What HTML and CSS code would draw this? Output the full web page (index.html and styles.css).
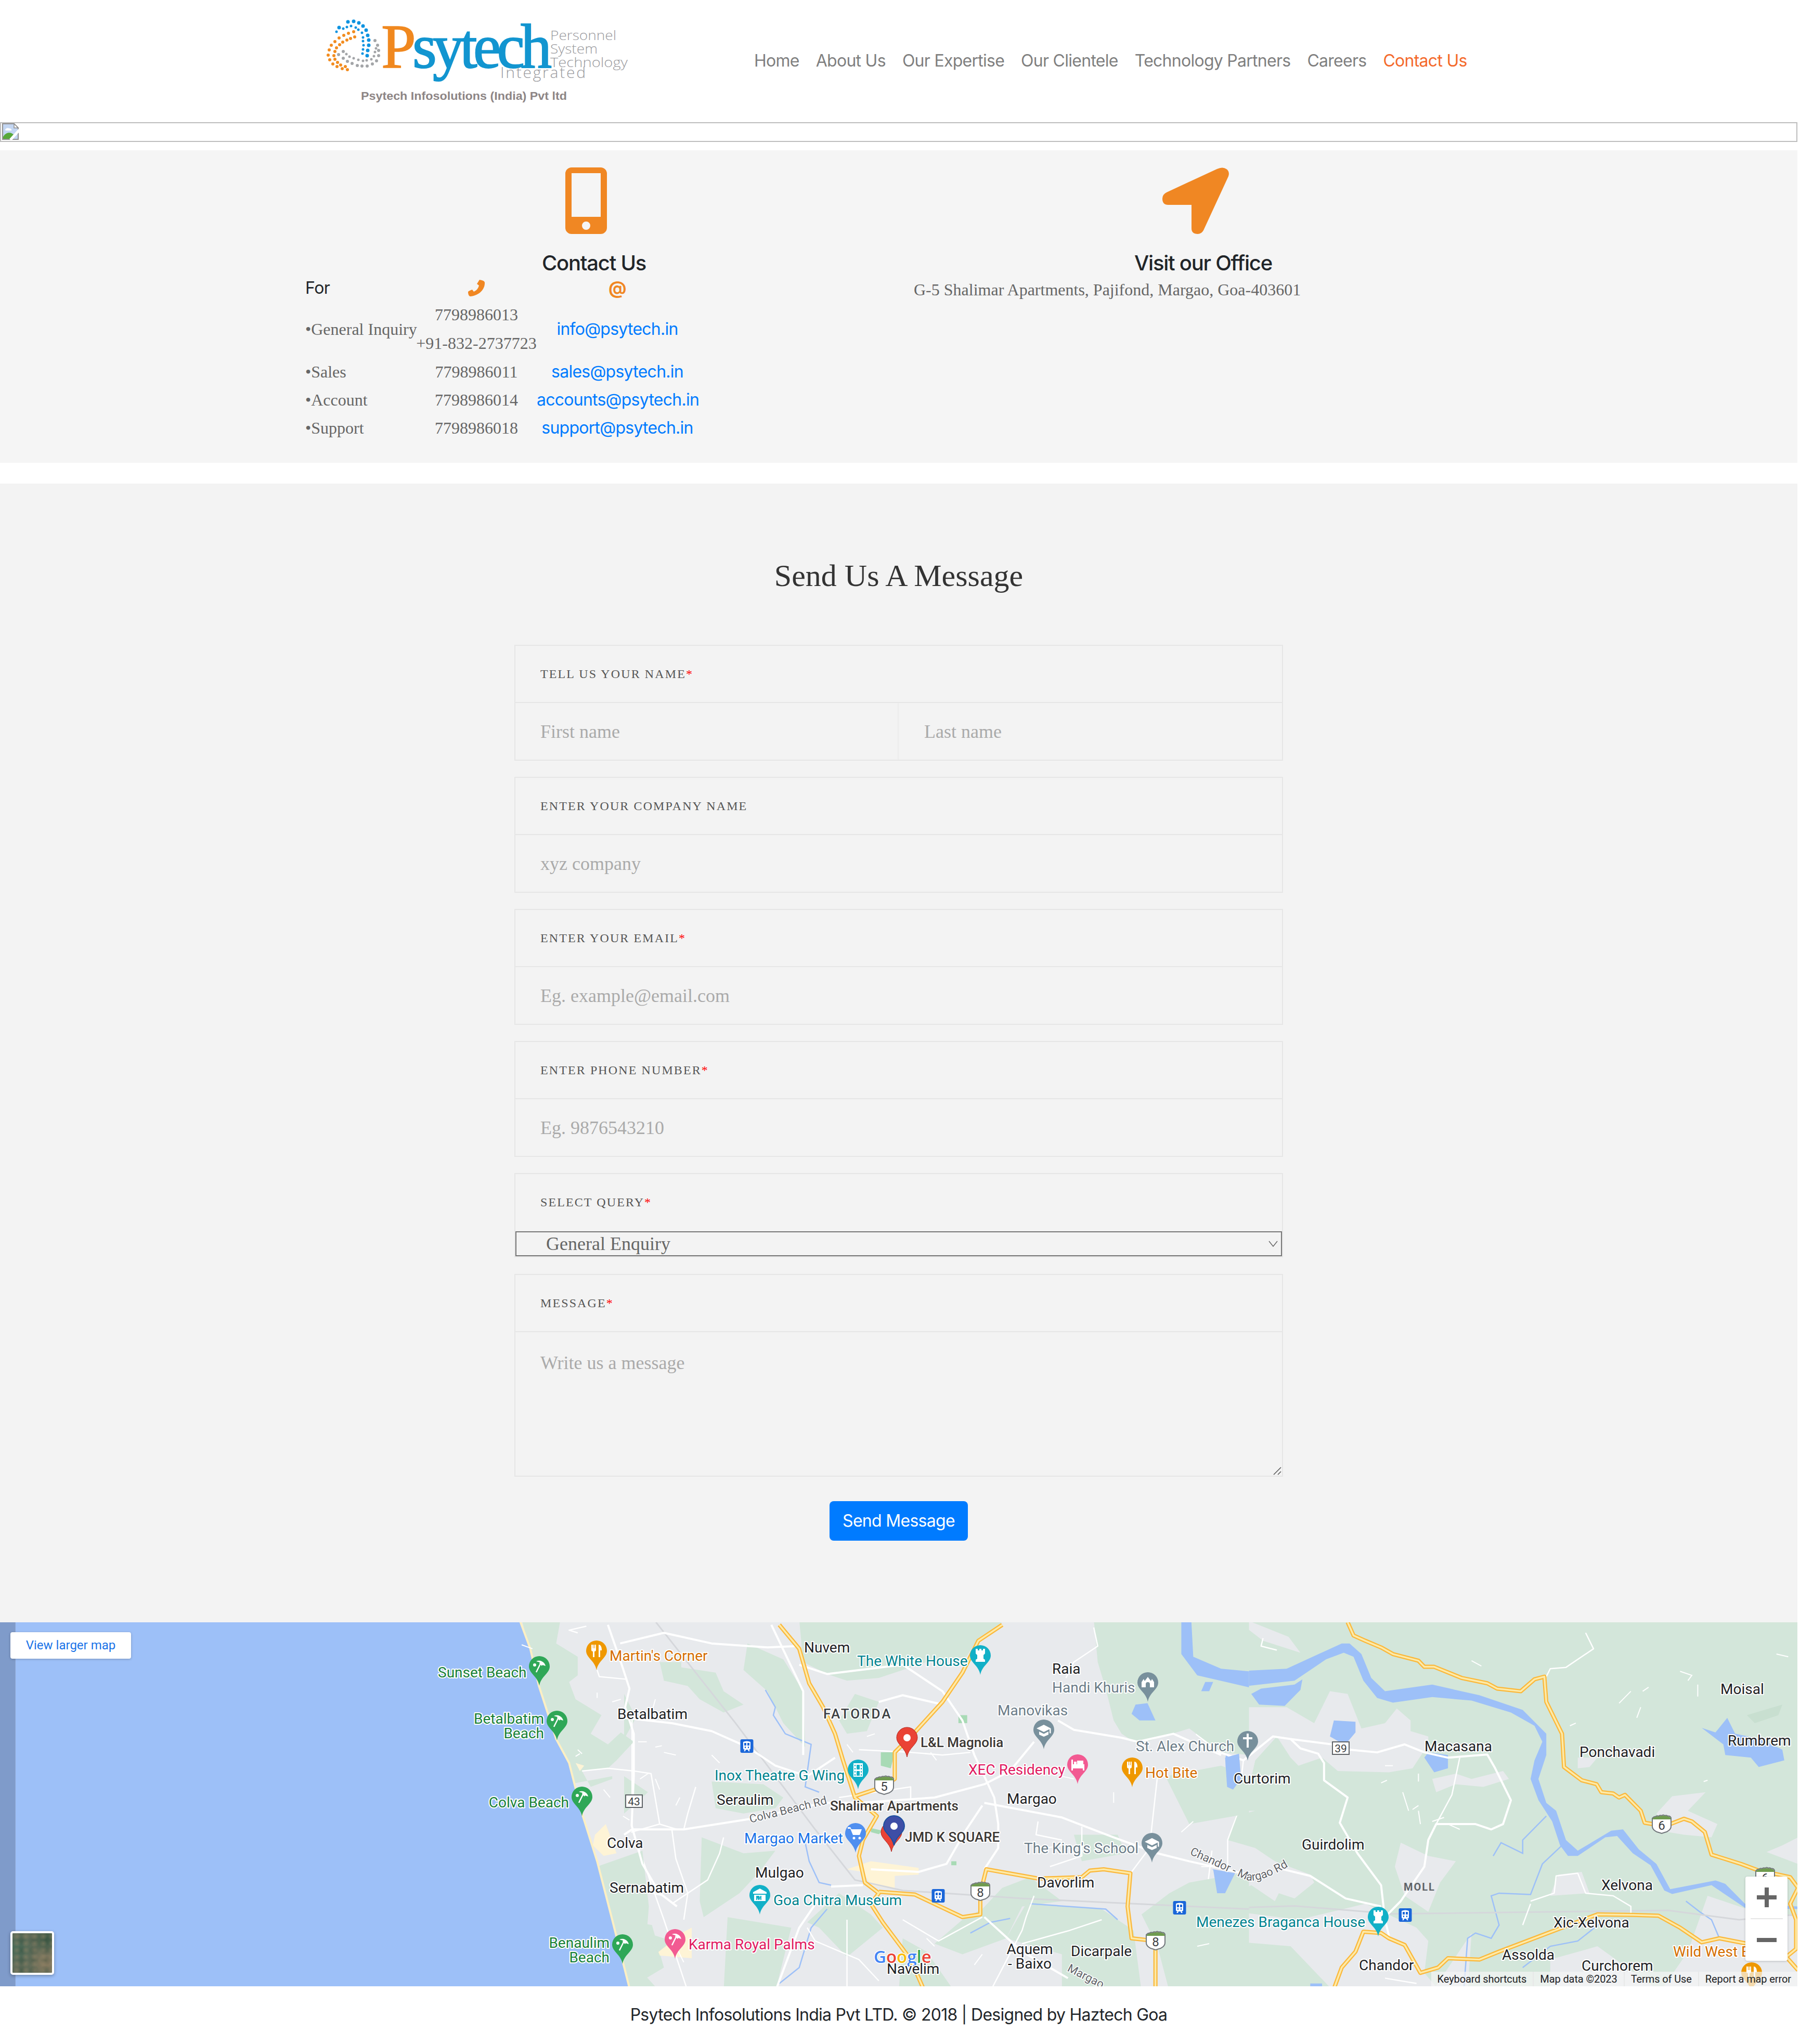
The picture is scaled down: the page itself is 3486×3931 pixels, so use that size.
FILE: index.html
```html
<!DOCTYPE html>
<html lang="en">
<head>
<meta charset="utf-8">
<title>Contact Us - Psytech Infosolutions</title>
<link rel="stylesheet" href="styles.css">
</head>
<body>
<div class="page">
  <header class="site-header">
    <svg class="logo" viewBox="620 30 600 175" width="600" height="175" aria-label="Psytech">
      <path class="dots d-blue" d="M652 53h0M669 42h0M680 41h0M690 44h0M698 50h0M704 58h0M707 68h0M709 77h0M709 87h0M707 97h0M706 107h0"/>
      <path class="dots d-blue2" d="M647 61h0M660 55h0M667 52h0M675 50h0M684 53h0M689 57h0M696 63h0M698 72h0M698 79h0M699 87h0M698 95h0M697 103h0"/>
      <path class="dots d-orange" d="M680 61h0M670 64h0M661 68h0M652 73h0M644 80h0M637 87h0M633 96h0M631 106h0M634 115h0M640 123h0M648 128h0M658 132h0M668 134h0"/>
      <path class="dots d-orange2" d="M682 71h0M674 74h0M667 77h0M659 81h0M653 86h0M647 92h0M644 99h0M642 107h0M644 114h0M649 120h0M655 125h0M664 128h0"/>
      <path class="dots d-grey" d="M660 99h0M651 105h0M660 112h0M668 118h0M677 122h0M687 126h0M696 127h0M706 127h0M716 123h0M724 117h0M728 107h0M728 97h0M726 87h0M721 78h0"/>
      <path class="dots d-grey2" d="M666 104h0M672 109h0M680 112h0M689 115h0M698 117h0M705 116h0M714 114h0M719 108h0M721 100h0M723 93h0"/>
      <text class="logo-p" x="733" y="130">P</text>
      <text class="logo-s" x="793" y="130" textLength="268" lengthAdjust="spacing">sytech</text>
      <text class="logo-t" x="1058" y="77" textLength="127" lengthAdjust="spacingAndGlyphs">Personnel</text>
      <text class="logo-t" x="1058" y="103" textLength="91" lengthAdjust="spacingAndGlyphs">System</text>
      <text class="logo-t" x="1058" y="129" textLength="149" lengthAdjust="spacingAndGlyphs">Technology</text>
      <text class="logo-i" x="962" y="150" textLength="164" lengthAdjust="spacing">Integrated</text>
      <text class="logo-c" x="694" y="192" textLength="396" lengthAdjust="spacingAndGlyphs">Psytech Infosolutions (India) Pvt ltd</text>
    </svg>
    <nav class="main-nav">
      <a href="#">Home</a>
      <a href="#">About Us</a>
      <a href="#">Our Expertise</a>
      <a href="#">Our Clientele</a>
      <a href="#">Technology Partners</a>
      <a href="#">Careers</a>
      <a href="#" class="active">Contact Us</a>
    </nav>
  </header>

  <div class="broken-img">
    <svg width="32" height="32" viewBox="0 0 32 32" class="broken-icon">
      <path d="M1 1h22l8 8v22H1z" fill="#c3d6f2" stroke="#8f8f8f" stroke-width="2"/>
      <path d="M23 1v8h8z" fill="#fff" stroke="#8f8f8f" stroke-width="1.5"/>
      <path d="M6 13c0-3 5-5 8-3 3 0 5 2 4 4H7z" fill="#fff"/>
      <path d="M2 30v-4c6-10 16-10 22-2l-4 6z" fill="#57a83a"/>
      <path d="M16 32L34 12" stroke="#fff" stroke-width="5"/>
    </svg>
  </div>

  <section class="contact-band">
    <div class="col-contact">
      <svg class="icon-phone" width="80" height="128" viewBox="0 0 80 128">
        <path fill-rule="evenodd" d="M12 0h56a12 12 0 0 1 12 12v104a12 12 0 0 1-12 12H12a12 12 0 0 1-12-12V12A12 12 0 0 1 12 0zM12 11v84h56V11zM40 104a8 8 0 1 0 0 16 8 8 0 0 0 0-16z"/>
      </svg>
      <h5 class="title title-contact">Contact Us</h5>
      <table class="contact-table">
        <tr class="row-head">
          <th class="c1">For</th>
          <th class="c2">
            <svg class="mini" width="32" height="32" viewBox="0 0 32 32"><path d="M22 0c5 1 9 2 10 5 1 14-12 26-28 27-3-1-4-5-4-9 2-2 5-3 8-4l3 4c5-2 9-7 10-12l-4-3z"/></svg>
          </th>
          <th class="c3"><span class="at">@</span></th>
        </tr>
        <tr class="row-general">
          <td class="c1">•General Inquiry</td>
          <td class="c2"><div class="ph">7798986013</div><div class="ph">+91-832-2737723</div></td>
          <td class="c3"><a href="#">info@psytech.in</a></td>
        </tr>
        <tr><td class="c1">•Sales</td><td class="c2">7798986011</td><td class="c3"><a href="#">sales@psytech.in</a></td></tr>
        <tr><td class="c1">•Account</td><td class="c2">7798986014</td><td class="c3"><a href="#">accounts@psytech.in</a></td></tr>
        <tr><td class="c1">•Support</td><td class="c2">7798986018</td><td class="c3"><a href="#">support@psytech.in</a></td></tr>
      </table>
    </div>
    <div class="col-office">
      <svg class="icon-arrow" width="128" height="128" viewBox="0 0 128 128">
        <path d="M8 48L105 3Q116-2 123 3Q130 8 127 17L79 121Q75 128 68 128Q56 128 56 117V72H11Q0 72 0 60Q0 52 8 48Z"/>
      </svg>
      <h5 class="title title-office">Visit our Office</h5>
      <p class="address">G-5 Shalimar Apartments, Pajifond, Margao, Goa-403601</p>
    </div>
  </section>

  <section class="form-band">
    <h2 class="form-title">Send Us A Message</h2>
    <form class="msg-form">
      <div class="field">
        <label class="field-label">Tell us your name<span class="req">*</span></label>
        <div class="field-split">
          <input class="field-input" type="text" placeholder="First name">
          <input class="field-input" type="text" placeholder="Last name">
        </div>
      </div>
      <div class="field">
        <label class="field-label">Enter your company name</label>
        <div class="field-row"><input class="field-input" type="text" placeholder="xyz company"></div>
      </div>
      <div class="field">
        <label class="field-label">Enter your email<span class="req">*</span></label>
        <div class="field-row"><input class="field-input" type="text" placeholder="Eg. example@email.com"></div>
      </div>
      <div class="field">
        <label class="field-label">Enter phone number<span class="req">*</span></label>
        <div class="field-row"><input class="field-input" type="text" placeholder="Eg. 9876543210"></div>
      </div>
      <div class="field field-select">
        <label class="field-label">Select query<span class="req">*</span></label>
        <div class="select-wrap">
          <select class="query"><option>General Enquiry</option></select>
          <svg class="chev" width="18" height="12" viewBox="0 0 18 12"><path d="M1 1l8 10 8-10" fill="none" stroke="#666" stroke-width="1.5"/></svg>
        </div>
      </div>
      <div class="field field-message">
        <label class="field-label">Message<span class="req">*</span></label>
        <div class="field-row area-row">
          <textarea class="field-area" placeholder="Write us a message"></textarea>
          <svg class="grip" width="16" height="16" viewBox="0 0 16 16"><path d="M1 15L15 1M9 15l6-6" fill="none" stroke="#555" stroke-width="1.5"/></svg>
        </div>
      </div>
      <div class="actions"><button type="button" class="send">Send Message</button></div>
    </form>
  </section>

  <section class="map">
    <svg class="map-svg" width="3456" height="700" viewBox="0 0 3456 700">
      <defs>
        <path id="pin" d="M0 0C-3-18-20-24-20-37A20 20 0 1 1 20-37C20-24 3-18 0 0Z"/>
        <g id="i-beach"><circle cx="-9" cy="-40" r="3"/><path d="M-6-47a13 13 0 0 1 18 9l-6-2-1 2-5-5 1-2z"/><path class="wl" d="M2-42L-6-26"/></g>
        <g id="i-food"><path d="M-10-49v10a3 3 0 0 0 3 3v11h3v-11a3 3 0 0 0 3-3v-10H-3v7h-1v-7h-2v7h-1v-7z"/><path d="M4-49c4 0 6 4 6 11H7v13H4z"/></g>
        <g id="i-rook"><path d="M-9-50h4v3h3v-3h4v3h3v-3h4v9l-3 3v7l3 2v4H-9v-4l3-2v-7l-3-3z"/></g>
        <g id="i-school"><path d="M0-47l-14 7 14 7 11-5.500v8h2.500v-9.500zM-9-34v6l9 4 9-4v-6l-9 4.500z"/></g>
        <g id="i-cross"><path d="M-2-52h4v7h7v4H2v16h-4v-16H-9v-4h7z"/></g>
        <g id="i-mon"><path d="M-12-28v-10l4-6 2 4 6-8 6 8 2-4 4 6v10H4v-6a4 4 0 0 0-8 0v6z"/></g>
        <g id="i-film"><path fill-rule="evenodd" d="M-9-50H9v26H-9zM-7-47v3h2v-3zM5-47v3h2v-3zM-7-41v3h2v-3zM5-41v3h2v-3zM-7-35v3h2v-3zM5-35v3h2v-3zM-7-29v3h2v-3zM5-29v3h2v-3zM-3-47v9H3v-9zM-3-35v9H3v-9z"/></g>
        <g id="i-cart"><path d="M-15-49h5l2 4h20l-4 11H-5l-5-12h-5z"/><circle cx="-3" cy="-28" r="2.500"/><circle cx="8" cy="-28" r="2.500"/></g>
        <g id="i-bed"><path d="M-12-47h3v9H13v12h-3v-4H-9v4h-3zM-7-43h5v5h-5zM-1-45h12v7H-1z"/></g>
        <g id="i-muse"><path fill-rule="evenodd" d="M0-50l-13 7v3h26v-3zM-11-38v12h22v-12zM-7-36v8h2v-4l2 4h2l2-4v4h2v-8H1l-1 4-1-4z"/></g>
        <g id="shield"><path class="sh-body" d="M-18-12c2-2 4-4 6-3 2-2 4-2 6-1 2-2 4-2 6-1 2-2 4-2 6 0 2-1 4-1 6 1 2-1 5 0 6 3v16c0 7-7 11-12 12l-6 2-6-2c-5-1-12-5-12-12z"/><path class="sh-top" d="M-18-10c2-3 4-5 6-4 2-2 4-2 6-1 2-2 4-2 6-1 2-2 4-2 6 0 2-1 4-1 6 1 2-1 5 0 6 5z"/></g>
        <g id="train"><rect x="-12.500" y="-13" width="25" height="26" rx="3" class="tr-b"/><path class="tr-w" fill-rule="evenodd" d="M-7-8q7-3 14 0v12q0 3-3 3l2 3H3l-1-3h-4l-1 3h-3l2-3q-3 0-3-3zM-5-6v5h4v-5zM1-6v5h4v-5zM-4 1v3h2V1zM2 1v3h2V1z"/></g>
        <polyline id="r1" points="390,-10 440,80 465,210 500,300 530,400 550,500 580,640 620,690 635,710 600,800 590,860 605,960 640,1000 620,1040 650,1110 720,1250 755,1370"/>
        <polyline id="r2" points="580,635 650,600 680,570 680,470 730,395 800,280 850,170 890,50 950,-10"/>
        <polyline id="r3" points="640,995 730,1005 850,1090 895,1080 895,1000 910,910 1040,945 1150,940 1170,915 1205,910 1272,925 1265,1050 1275,1170 1335,1180 1335,1370"/>
        <polyline id="r4" points="385,-20 400,30 430,50 470,75 500,100 565,125 580,148 605,148 675,190 740,210 765,230 825,240 860,195 885,185 890,280 930,400 935,525 980,575 1018,590 1030,620 1060,625 1075,640 1090,630 1130,690 1140,735 1160,740 1205,740 1240,720 1260,730 1293,770 1310,855 1385,890 1430,915 1480,930 1510,940 1530,980 1510,1040 1525,1100 1525,1210 1500,1240 1530,1290"/>
        <polyline id="r5" points="350,1360 370,1280 405,1220 425,1145 470,1150 490,1170 530,1195 570,1300 615,1280 640,1245 720,1250 770,1220 930,1130 1020,1080 1110,1082 1175,1085 1230,1130 1285,1185 1330,1170 1400,1190 1500,1200"/>
      </defs>

      <rect class="land" width="3456" height="700"/>

      <g transform="translate(2300 10) scale(.7564 .5109)">
        <polygon class="green" points="130,-30 1530,-30 1530,1370 -60,1370 -60,1020 100,1000 140,970 200,1030 210,1000 250,1020 300,960 290,930 200,880 150,830 80,800 100,710 120,690 150,500 205,410 100,280 130,150"/>
        <polygon class="land" points="100,-30 170,50 265,95 235,35 125,-30"/>
        <polygon class="land" points="120,300 230,300 300,360 340,240 385,250 420,380 480,360 510,305 545,350 545,390 590,410 590,440 550,530 490,545 360,540 320,490 260,520 240,490 205,410 150,500 120,690 150,690 100,710"/>
        <polygon class="land" points="600,570 660,550 700,570 780,540 795,570 730,600 660,590 610,620"/>
        <polygon class="land" points="520,810 590,860 660,880 620,960 590,1070 530,1010 505,900"/>
        <polygon class="land" points="920,930 980,920 1000,1000 900,1010"/>
        <polygon class="land" points="1170,700 1210,635 1295,620 1250,690 1325,740 1310,790 1240,780 1200,770"/>
        <polygon class="land" points="970,490 1020,490 1000,525 970,530"/>
        <polygon class="land" points="1490,820 1530,790 1530,890 1450,845"/>
        <polygon class="land" points="0,1050 260,1100 430,1040 560,1130 590,1180 580,1300 620,1370 350,1370 240,1200 0,1170"/>
        <polygon class="land" points="650,1260 700,1150 690,1370 600,1370"/>
        <polygon class="land" points="1300,1010 1400,1060 1530,1090 1530,1370 1180,1370 1250,1220"/>
        <polygon class="land" points="900,1250 1020,1200 1180,1370 900,1370"/>
        <polygon class="green2" points="1400,330 1490,290 1480,330 1420,360"/>
        <polygon class="water" points="0,130 100,165 230,155 370,60 390,60 420,100 445,190 480,240 600,215 720,255 830,310 890,400 890,480 870,570 890,660 915,690 940,800 970,840 1055,765 1085,760 1125,835 1170,890 1205,985 1320,952 1345,965 1395,1040 1530,1050 1530,1060 1395,1055 1340,1000 1310,970 1210,1003 1190,990 1155,895 1110,850 1070,785 1040,790 970,860 945,860 925,820 905,730 870,650 850,570 860,500 880,430 860,370 800,320 700,275 600,262 500,283 460,265 425,200 400,110 375,95 330,120 250,200 100,225 0,195"/>
        <polygon class="water" points="140,250 165,230 250,215 270,195 265,235 225,295 160,290"/>
        <polygon class="water" points="340,410 350,350 405,355 405,395 385,430 375,440"/>
        <polygon class="water" points="580,490 590,470 640,480 640,530 605,545"/>
        <polygon class="water" points="1285,378 1320,395 1350,340 1370,400 1435,420 1490,460 1495,500 1430,525 1410,490 1345,480 1340,440"/>
        <polygon class="water" points="75,480 105,510 85,610 75,590"/>
        <polygon class="water" points="40,910 100,930 55,1000 85,950"/>
        <polygon class="water" points="20,210 50,215 40,240 15,240"/>
        <polygon class="water" points="115,240 130,235 120,310 110,280"/>
        <polygon class="water" points="290,1340 320,1340 320,1370 290,1370"/>
        <polyline class="thin" points="680,1370 690,1170 710,1150 750,1170 770,1120 750,1010 770,1000 850,1005 880,890 930,820"/>
        <polyline class="thin" points="890,710 830,800 830,850 775,810 755,860"/>
        <polyline class="thin" points="1245,1030 1280,1070 1310,1100 1330,1170"/>
        <polyline class="thin" points="830,1280 900,1200 970,1180 1030,1110"/>
        <polyline class="rail" points="0,1060 250,1048 500,1078 1200,1065 1380,1100 1530,1080"/>
        <polyline class="wr" points="0,400 60,470 120,500 195,410 240,420 265,455 310,475 325,510 325,575 385,640 365,735 410,850 470,970 480,1100 490,1160"/>
        <polyline class="wr" points="240,420 345,440 390,460 460,470 530,440 580,470 640,490 740,478 760,530 800,650 780,740 750,760 710,740 610,740 590,800 580,900 520,1030 480,1090"/>
        <polyline class="wr" points="220,910 290,935 380,1020 470,1050"/>
        <polyline class="wr2" points="670,490 650,630 610,740"/>
        <polyline class="wr2" points="850,1030 910,1000 915,935 970,925 990,1000 1060,1010 1105,1050 1105,1080"/>
        <polyline class="wr2" points="830,1120 850,1040"/>
        <polyline class="wr2" points="890,185 900,155 940,150 1010,80 990,20"/>
        <polyline class="wr2" points="120,500 105,700 80,800 80,1030"/>
        <polyline class="wr2" points="40,840 30,960 60,1010 0,1010"/>
        <polyline class="wr2" points="170,40 165,70 205,85"/>
        <polyline class="wr2" points="480,1320 560,1340"/>
        <path class="tick" d="M525 620l15 70M565 670l-15 15M600 730l30-15M640 740l30 20M700 125l25 20M1230 165l30 15 -10 20M1075 285l30-45M1120 340l10-40M1275 215v45M1475 100l30 10M1150 225l-15 15M950 370l15-10M470 585l15-10M480 520h20M565 580v-30M570 740l-5-50M1290 580l10-5"/>
        <use href="#r4" class="hwo"/><use href="#r5" class="hwo"/>
        <use href="#r4" class="hwi"/><use href="#r5" class="hwi"/>
      </g>

      <g transform="translate(1200 10) scale(.7653 .5109)">
        <polygon class="green" points="440,-30 960,-30 890,40 860,110 760,130 640,190 560,200 510,175 450,130"/>
        <polygon class="green" points="1180,-30 1570,-30 1570,480 1500,470 1420,380 1290,440 1250,400 1230,350 1210,230 1190,130"/>
        <polygon class="green" points="100,140 230,170 250,240 300,290 250,320 190,270 160,220 100,200"/>
        <polygon class="green" points="310,60 400,120 450,240 455,450 400,360 360,240 300,160"/>
        <polygon class="green" points="220,580 350,590 400,640 380,680 300,700 230,680"/>
        <polygon class="green" points="195,790 300,850 380,840 340,920 290,1000 200,1090 190,1030"/>
        <polygon class="green" points="0,560 60,620 0,700"/>
        <polygon class="green" points="0,250 30,340 0,420"/>
        <polygon class="green" points="540,1000 620,1080 650,1130 560,1240 490,1130 460,1110"/>
        <polygon class="green" points="950,980 1020,940 1100,1030 1000,1050 960,1170 850,1230 780,1190 850,1100 900,1060"/>
        <polygon class="green" points="1010,1040 1200,1060 1280,1140 1300,1370 1100,1370 1100,1230 960,1170"/>
        <polygon class="green" points="1360,560 1500,520 1570,560 1570,700 1420,740"/>
        <polygon class="green" points="1420,960 1570,920 1570,1370 1370,1370 1340,1200 1300,1080 1370,1000"/>
        <polygon class="green" points="260,1090 420,1130 380,1370 250,1370"/>
        <polygon class="green" points="0,1100 70,1120 100,1280 0,1370"/>
        <polygon class="green" points="700,1170 760,1220 830,1370 690,1370"/>
        <polygon class="green" points="540,350 580,250 640,280 610,390 560,400"/>
        <polygon class="green" points="1130,780 1240,780 1260,850 1150,880"/>
        <polygon class="park" points="645,470 680,470 670,530 645,520"/>
        <polygon class="park" points="840,330 862,330 862,360 840,360"/>
        <polygon class="park" points="822,880 835,880 835,895 822,895"/>
        <polygon class="park" points="620,755 650,765 640,778 620,770"/>
        <polygon class="urban" points="560,910 620,880 740,905 740,930 680,935 680,985 620,970 600,920"/>
        <polygon class="urban" points="80,1200 170,1130 170,1245 90,1235"/>
        <polygon class="water" points="1400,-30 1425,-30 1430,110 1500,155 1570,165 1570,225 1440,180 1400,100"/>
        <polygon class="water" points="1285,290 1315,285 1335,350 1295,350 1275,325"/>
        <polygon class="water" points="1510,490 1545,475 1550,570 1530,610 1515,600"/>
        <polygon class="water" points="1480,910 1535,925 1510,1000 1490,1000"/>
        <polygon class="water" points="1460,205 1480,205 1470,240 1450,240"/>
        <polyline class="thin" points="355,235 380,300 375,330 405,400 470,440 455,600 490,620"/>
        <polyline class="thin" points="455,810 465,880 490,960 520,970"/>
        <polyline class="thin" points="510,1060 470,1130 440,1280 390,1340"/>
        <polyline class="thin" points="1020,1040 1210,1060 1240,1100"/>
        <polyline class="thin" points="870,1150 920,1110 970,1095"/>
        <polyline class="rail" points="80,-20 280,360 480,760 580,950 700,990 1000,1020 1570,1060"/>
        <polyline class="wr" points="-10,60 100,20 220,60 360,75 430,70"/>
        <polyline class="wr" points="440,140 510,175 700,140 800,240 850,350 880,480 930,640 940,740 940,830 905,910"/>
        <polyline class="wr" points="370,-10 450,240 450,480"/>
        <polyline class="wr" points="0,340 120,360 220,390 310,450 380,520 460,560 530,490"/>
        <polyline class="wr" points="0,780 20,760 150,760 320,720 500,660 590,660 780,640 905,590 970,540 1030,430"/>
        <polyline class="wr" points="905,660 1100,715 1230,790 1340,850 1420,880 1570,930"/>
        <polyline class="wr" points="1090,350 1130,385 1250,415 1290,430 1380,400 1440,440 1500,480"/>
        <polyline class="wr" points="640,280 700,255 800,290"/>
        <polyline class="wr2" points="590,460 720,470 800,480 870,470"/>
        <polyline class="wr" points="520,975 600,970"/>
        <polyline class="wr" points="490,1020 440,1130 380,1370"/>
        <polyline class="wr" points="905,1090 1000,1220 1115,1320"/>
        <polyline class="wr" points="620,910 740,920 810,890 860,760 900,670"/>
        <polyline class="wr2" points="1340,560 1320,830 1270,930"/>
        <polyline class="wr2" points="460,1130 480,1180 590,1250 640,1330"/>
        <polyline class="wr2" points="20,340 20,760 100,1100 160,1370"/>
        <polyline class="wr2" points="120,760 130,870 160,1000 150,1100"/>
        <polyline class="wr2" points="250,790 240,850 210,950 120,1040"/>
        <polyline class="wr2" points="180,600 160,700 150,760"/>
        <polyline class="wr2" points="1030,1010 1010,1090 1000,1140 920,1370"/>
        <polyline class="wr2" points="540,640 720,600 720,650"/>
        <polyline class="wr2" points="1180,0 1190,70 1130,130 1110,190"/>
        <polyline class="wr2" points="1150,750 1150,860 1070,900"/>
        <polyline class="wr2" points="1040,730 1035,780 1100,800"/>
        <polyline class="wr2" points="700,1100 790,1180 900,1090"/>
        <polyline class="wr2" points="560,1100 560,1370"/>
        <polyline class="wr2" points="1000,1190 1120,1140 1200,1100"/>
        <path class="tick" d="M100 470l30 10M140 640l-10 30M60 550l-20 20M70 1000l30 10M280 640h-20M690 400l30 15M610 410l20-10M560 440l15 30M1100 560l30 10M1230 620v40M1400 770l30-40M1150 1200l40 20M1440 1200l30-10M1450 900h40M760 1170l20 30M900 1230l-20 40M220 480l20 30M130 1200l20 60M1060 830l40-10M770 470l15 30"/>
        <use href="#r1" class="hwo"/><use href="#r2" class="hwo"/><use href="#r3" class="hwo"/>
        <use href="#r1" class="hwi"/><use href="#r2" class="hwi"/><use href="#r3" class="hwi"/>
      </g>

      <g transform="translate(0 10) scale(.829 .5109)">
        <polygon class="green" points="1210,-30 1300,-30 1290,60 1340,110 1340,180 1320,205 1335,270 1370,305 1395,330 1370,400 1410,440 1440,395 1470,430 1430,500 1410,530 1350,540 1370,600 1420,570 1420,560 1320,590 1290,420 1250,220"/>
        <polygon class="green" points="1385,900 1490,840 1505,1050 1500,1150 1560,1180 1480,1280 1530,1370 1450,1370 1410,1060"/>
        <polygon class="green" points="1530,130 1580,130 1580,210 1540,200"/>
        <polygon class="urban" points="1380,780 1405,740 1430,850 1400,860 1375,820"/>
        <polygon class="urban" points="1335,510 1355,520 1345,540"/>
        <polygon class="water" points="36,-30 1203,-30 1230,80 1250,220 1290,420 1320,510 1350,700 1385,880 1420,1100 1462,1370 36,1370"/>
        <polygon class="band" points="0,-30 36,-30 36,1370 0,1370"/>
        <polyline class="sand" points="1205,-30 1230,80 1250,220 1290,420 1320,510 1350,700 1385,880 1420,1100 1462,1370"/>
        <polyline class="wr" points="1410,-10 1440,130 1460,230 1450,300 1470,400 1470,560 1465,745 1490,890 1530,1000 1570,1050"/>
        <polyline class="wr2" points="1350,540 1410,530 1470,540 1510,550 1530,740 1465,770 1530,740 1570,760"/>
        <polyline class="wr2" points="1385,160 1390,185 1455,195"/>
        <polyline class="wr2" points="1340,20 1320,10 1360,-5"/>
        <path class="tick" d="M1210 65l25 15M1385 245v20M1440 270l-20 10M1340 460l10 15M1345 475l-10 10M1520 270l-5 30M1480 430h20M1520 450l15-5M1520 570l10 40M1400 610l15 30M1445 710l15 15"/>
      </g>

      <g class="route" transform="translate(1219 344)"><rect x="-16" y="-12" width="32" height="24"/><text y="8">43</text></g>
      <g class="route" transform="translate(2578 242)"><rect x="-16" y="-12" width="32" height="24"/><text y="8">39</text></g>
      <g class="shield" transform="translate(1700 314)"><use href="#shield"/><text y="10">5</text></g>
      <g class="shield" transform="translate(1885 518)"><use href="#shield"/><text y="10">8</text></g>
      <g class="shield" transform="translate(2222 613)"><use href="#shield"/><text y="10">8</text></g>
      <g class="shield" transform="translate(3195 389)"><use href="#shield"/><text y="10">6</text></g>
      <g class="shield" transform="translate(3394 490)"><use href="#shield"/><text y="10">6</text></g>

      <use href="#train" transform="translate(1436 238)"/>
      <use href="#train" transform="translate(1804 526)"/>
      <use href="#train" transform="translate(2268 549)"/>
      <use href="#train" transform="translate(2702 563)"/>

      <g class="pin p-green" transform="translate(1037 122)"><use href="#pin"/><use class="gl" href="#i-beach"/></g>
      <g class="pin p-green" transform="translate(1071 227)"><use href="#pin"/><use class="gl" href="#i-beach"/></g>
      <g class="pin p-green" transform="translate(1119 373)"><use href="#pin"/><use class="gl" href="#i-beach"/></g>
      <g class="pin p-green" transform="translate(1197 657)"><use href="#pin"/><use class="gl" href="#i-beach"/></g>
      <g class="pin p-orange" transform="translate(1147 92)"><use href="#pin"/><use class="gl" href="#i-food"/></g>
      <g class="pin p-orange" transform="translate(2177 317)"><use href="#pin"/><use class="gl" href="#i-food"/></g>
      <g class="pin p-orange" transform="translate(3368 711)"><use href="#pin"/><use class="gl" href="#i-food"/></g>
      <g class="pin p-teal" transform="translate(1885 101)"><use href="#pin"/><use class="gl" href="#i-rook"/></g>
      <g class="pin p-teal" transform="translate(2650 604)"><use href="#pin"/><use class="gl" href="#i-rook"/></g>
      <g class="pin p-teal" transform="translate(1650 321)"><use href="#pin"/><use class="gl" href="#i-film"/></g>
      <g class="pin p-teal" transform="translate(1461 562)"><use href="#pin"/><use class="gl" href="#i-muse"/></g>
      <g class="pin p-grey" transform="translate(2207 153)"><use href="#pin"/><use class="gl" href="#i-mon"/></g>
      <g class="pin p-grey" transform="translate(2007 244)"><use href="#pin"/><use class="gl" href="#i-school"/></g>
      <g class="pin p-grey" transform="translate(2215 462)"><use href="#pin"/><use class="gl" href="#i-school"/></g>
      <g class="pin p-grey" transform="translate(2399 266)"><use href="#pin"/><use class="gl" href="#i-cross"/></g>
      <g class="pin p-pink" transform="translate(2072 311)"><use href="#pin"/><use class="gl" href="#i-bed"/></g>
      <g class="pin p-pink" transform="translate(1298 647)"><use href="#pin"/><use class="gl" href="#i-beach"/></g>
      <g class="pin p-blue" transform="translate(1645 443)"><use href="#pin"/><use class="gl" href="#i-cart"/></g>
      <g class="pin p-red" transform="translate(1744 259)"><use href="#pin"/><circle class="gl" cy="-37" r="7"/></g>
      <g class="pin p-red" transform="translate(1714 441)"><use href="#pin"/></g>
      <g class="pin p-navy" transform="translate(1719 429)"><use href="#pin"/><circle class="gl" cy="-37" r="7"/></g>

      <g class="labels">
        <text class="l c-green" x="842" y="106">Sunset Beach</text>
        <text class="l c-green e" x="1046" y="195">Betalbatim</text>
        <text class="l c-green e" x="1046" y="223">Beach</text>
        <text class="l c-green e" x="1094" y="356">Colva Beach</text>
        <text class="l c-green e" x="1172" y="626">Benaulim</text>
        <text class="l c-green e" x="1172" y="654">Beach</text>
        <text class="l c-orange" x="1172" y="74">Martin's Corner</text>
        <text class="l c-orange" x="2202" y="299">Hot Bite</text>
        <text class="l" x="1187" y="186">Betalbatim</text>
        <text class="l" x="1167" y="434">Colva</text>
        <text class="l" x="1172" y="520">Sernabatim</text>
        <text class="l" x="1546" y="58">Nuvem</text>
        <text class="l c-teal" x="1648" y="84">The White House</text>
        <text class="l" x="2023" y="99">Raia</text>
        <text class="l c-grey" x="2023" y="135">Handi Khuris</text>
        <text class="l fatorda" x="1583" y="185">FATORDA</text>
        <text class="l c-grey" x="1918" y="179">Manovikas</text>
        <text class="l m" x="1770" y="240">L&amp;L Magnolia</text>
        <text class="l c-grey" x="2184" y="248">St. Alex Church</text>
        <text class="l c-pink" x="1862" y="293">XEC Residency</text>
        <text class="l c-teal" x="1374" y="304">Inox Theatre G Wing</text>
        <text class="l" x="1378" y="351">Seraulim</text>
        <text class="l m" x="1596" y="362">Shalimar Apartments</text>
        <text class="l" x="1936" y="349">Margao</text>
        <text class="road-name" transform="translate(1443 386) rotate(-14)">Colva Beach Rd</text>
        <text class="l c-blue" x="1431" y="425">Margao Market</text>
        <text class="l m" x="1740" y="422">JMD K SQUARE</text>
        <text class="l c-grey" x="1969" y="444">The King's School</text>
        <text class="l" x="1452" y="491">Mulgao</text>
        <text class="l c-teal" x="1487" y="544">Goa Chitra Museum</text>
        <text class="l" x="1994" y="510">Davorlim</text>
        <path id="chandor" d="M2287 446L2395 495Q2420 505 2490 462" fill="none"/>
        <text class="road-name"><textPath href="#chandor">Chandor - Margao Rd</textPath></text>
        <text class="l c-pink" x="1324" y="629">Karma Royal Palms</text>
        <text class="l" x="1980" y="638" text-anchor="middle">Aquem</text>
        <text class="l" x="1980" y="666" text-anchor="middle">- Baixo</text>
        <text class="l" x="2059" y="642">Dicarpale</text>
        <text class="google" x="1680" y="655"><tspan class="g-b">G</tspan><tspan class="g-r">o</tspan><tspan class="g-y">o</tspan><tspan class="g-b">g</tspan><tspan class="g-g">l</tspan><tspan class="g-r">e</tspan></text>
        <text class="l" x="1705" y="676">Navelim</text>
        <text class="road-name" transform="translate(2051 670) rotate(27)">Margao</text>
        <text class="l" x="2372" y="310">Curtorim</text>
        <text class="l c-teal" x="2300" y="586">Menezes Braganca House</text>
        <text class="l" x="3308" y="138">Moisal</text>
        <text class="l" x="2739" y="248">Macasana</text>
        <text class="l" x="3037" y="259">Ponchavadi</text>
        <text class="l" x="3322" y="237">Rumbrem</text>
        <text class="l" x="2503" y="437">Guirdolim</text>
        <text class="l" x="3079" y="515">Xelvona</text>
        <text class="l" x="2987" y="587">Xic-Xelvona</text>
        <text class="l" x="2888" y="649">Assolda</text>
        <text class="l" x="2613" y="669">Chandor</text>
        <text class="l" x="3041" y="670">Curchorem</text>
        <text class="l c-orange" x="3217" y="643">Wild West Bar</text>
        <text class="moll" x="2699" y="516">MOLL</text>
      </g>
    </svg>

    <a href="#" class="larger">View larger map</a>
    <div class="thumb"></div>
    <div class="zoom-ctrl">
      <span class="zoom-btn"><svg width="38" height="38" viewBox="0 0 38 38"><path d="M15 0h8v15h15v8H23v15h-8V23H0v-8h15z"/></svg></span>
      <span class="zoom-sep"></span>
      <span class="zoom-btn"><svg width="38" height="38" viewBox="0 0 38 38"><path d="M0 15h38v8H0z"/></svg></span>
    </div>
    <div class="attrib">
      <span>Keyboard shortcuts</span>
      <span>Map data ©2023</span>
      <span>Terms of Use</span>
      <span>Report a map error</span>
    </div>
  </section>

  <footer class="site-footer">Psytech Infosolutions India Pvt LTD. © 2018 | Designed by Haztech Goa</footer>
</div>
</body>
</html>
```
FILE: styles.css
```css
* { box-sizing: border-box; }
html, body { margin: 0; padding: 0; background: #fff; }
body { font-family: Inter, "Liberation Sans", sans-serif; font-size: 32px; line-height: 48px; color: #212529; }
a { text-decoration: none; }
.page { width: 3456px; }

/* header */
.site-header { height: 235px; display: flex; align-items: flex-start; }
.logo { margin: 30px 0 0 620px; flex: none; display: block; }
.dots { fill: none; stroke-linecap: round; }
.d-blue { stroke: #0e93e0; stroke-width: 7px; }
.d-blue2 { stroke: #0e93e0; stroke-width: 5px; }
.d-orange { stroke: #f28c1f; stroke-width: 6px; }
.d-orange2 { stroke: #f28c1f; stroke-width: 6px; }
.d-grey { stroke: #a3a5a8; stroke-width: 6px; }
.d-grey2 { stroke: #a3a5a8; stroke-width: 5px; }
.logo-p, .logo-s { font-family: "Liberation Serif", serif; font-size: 120px; }
.logo-p { fill: #f0881f; stroke: #f0881f; stroke-width: 1.5px; }
.logo-s { fill: #1295d0; stroke: #1295d0; stroke-width: 2px; }
.logo-t { font-family: "Open Sans", sans-serif; font-weight: 300; font-size: 26px; fill: #9a9a9e; }
.logo-i { font-family: "Open Sans", sans-serif; font-weight: 300; font-size: 30px; fill: #9a9a9e; }
.logo-c { font-family: "Liberation Sans", sans-serif; font-weight: 700; font-size: 22px; fill: #8d8585; }
.main-nav { display: flex; gap: 32px; margin: 93px 0 0 230px; letter-spacing: -.73px; }
.main-nav a { color: #7f7f7f; white-space: nowrap; }
.main-nav a.active { color: #f4692a; }

/* broken image */
.broken-img { height: 38px; border: 2px solid #bdbdbd; overflow: hidden; padding: 0 0 0 2px; }
.broken-icon { display: block; }

/* contact band */
.contact-band { margin-top: 16px; height: 601px; background: #f5f5f5; padding: 33px 0 0 587px; display: flex; }
.col-contact { width: 1170px; flex: none; }
.col-office { flex: 1; }
.icon-phone { display: block; margin-left: 500px; fill: #f08723; }
.icon-arrow { display: block; margin-left: 478px; fill: #f08723; }
.title { margin: 32px 0 0; font-size: 40px; line-height: 48px; font-weight: 500; letter-spacing: -1.25px; color: #212529; }
.title-contact { margin-left: 455px; }
.title-office { margin-left: 424px; }
.contact-table { border-collapse: collapse; margin-top: 0; table-layout: fixed; width: 755px; font-family: "Liberation Serif", serif; color: #666; }
.contact-table td, .contact-table th { padding: 0; font-weight: 400; }
.contact-table td { height: 54px; white-space: nowrap; }
.contact-table .c1 { width: 213px; text-align: left; }
.contact-table .c2 { width: 232px; text-align: center; }
.contact-table .c3 { width: 310px; text-align: center; }
.contact-table a { font-family: Inter, sans-serif; color: #007bff; letter-spacing: -.75px; }
.row-head th { height: 44px; font-family: Inter, sans-serif; color: #212529; letter-spacing: -.5px; }
.contact-table .row-general td { height: 110px; }
.ph { height: 55px; line-height: 54px; white-space: nowrap; }
.mini { display: block; margin: 0 auto; fill: #f08723; }
.at { font-family: Inter, sans-serif; font-weight: 700; font-size: 34px; color: #f08723; display: block; line-height: 34px; }
.address { margin: 3px 0 0; font-family: "Liberation Serif", serif; color: #666; white-space: nowrap; }

/* form */
.form-band { margin-top: 40px; height: 2190px; background: #f3f3f3; padding-top: 141px; }
.form-title { margin: 0 0 97px; font-family: "Liberation Serif", serif; font-weight: 400; font-size: 60px; line-height: 72px; color: #333; text-align: center; }
.msg-form { width: 1478px; margin: 0 auto; font-family: "Liberation Serif", serif; }
.field { border: 2px solid #e6e6e6; margin-bottom: 31px; height: 223px; display: flex; flex-direction: column; }
.field-select { height: 162px; margin-bottom: 32px; }
.field-message { height: 390px; margin-bottom: 47px; }
.field-label { height: 108px; flex: none; display: flex; align-items: center; padding-left: 48px; font-size: 24px; line-height: 30px; letter-spacing: 2.1px; text-transform: uppercase; color: #555; }
.req { color: #f00; }
.field-row, .field-split { flex: 1; border-top: 2px solid #e6e6e6; display: flex; min-height: 0; }
.field-input { flex: 1; min-width: 0; height: 100%; border: 0; background: transparent; outline: 0; font: 36px "Liberation Serif", serif; color: #666; padding: 0 48px; }
.field-split .field-input:first-child { flex: none; width: 735px; }
.field-split .field-input + .field-input { border-left: 2px solid #ececec; padding-left: 49px; }
.field-input::placeholder, .field-area::placeholder { color: #aaa; opacity: 1; }
.select-wrap { position: relative; height: 48px; margin-top: 2px; }
.query { appearance: none; -webkit-appearance: none; display: block; width: 100%; height: 48px; border: 2px solid #767676; border-radius: 0; background: transparent; font: 36px/40px "Liberation Serif", serif; color: #666; padding: 0 0 0 57px; }
.chev { position: absolute; right: 8px; top: 18px; }
.area-row { position: relative; }
.field-area { display: block; width: 100%; height: 100%; border: 0; background: transparent; outline: 0; resize: none; font: 36px/42px "Liberation Serif", serif; color: #666; padding: 38px 48px; }
.grip { position: absolute; right: 1px; bottom: 1px; }
.actions { display: flex; justify-content: center; }
.send { height: 76px; width: 266px; border: 0; border-radius: 8px; background: #007bff; color: #fff; font: 32px/48px Inter, sans-serif; letter-spacing: -.7px; padding: 0; }

/* map */
.map { position: relative; height: 700px; overflow: hidden; }
.map-svg { display: block; font-family: Roboto, sans-serif; }
.land { fill: #e8eaed; }
.green { fill: #d3e6da; }
.green2 { fill: #c8dfd0; }
.water { fill: #9dc0f8; }
.band { fill: #7f9bca; }
.sand { fill: none; stroke: #fcefc4; stroke-width: 4px; vector-effect: non-scaling-stroke; }
.park { fill: #a8dab5; }
.urban { fill: #fef4d6; }
.thin { fill: none; stroke: #9dc0f8; stroke-width: 2.500px; vector-effect: non-scaling-stroke; }
.rail { fill: none; stroke: #d5d7db; stroke-width: 3px; vector-effect: non-scaling-stroke; }
.wr { fill: none; stroke: #fff; stroke-width: 4px; stroke-linejoin: round; vector-effect: non-scaling-stroke; }
.wr2 { fill: none; stroke: #fff; stroke-width: 2.500px; stroke-linejoin: round; vector-effect: non-scaling-stroke; }
.tick { fill: none; stroke: #fff; stroke-width: 2px; vector-effect: non-scaling-stroke; }
#r1, #r2, #r3, #r4, #r5 { fill: none; stroke-linejoin: round; vector-effect: non-scaling-stroke; }
.hwo { stroke: #fbb83a; stroke-width: 8px; }
.hwi { stroke: #fdeaa8; stroke-width: 3.500px; }
.route rect { fill: #fff; stroke: #5f6368; stroke-width: 2px; }
.route text { font-size: 21px; text-anchor: middle; fill: #3c4043; }
.sh-body { fill: #fff; stroke: #70757a; stroke-width: 2px; }
.sh-top { fill: #6f9b4f; }
.shield text { font-size: 24px; text-anchor: middle; fill: #3c4043; }
.tr-b { fill: #1a66d9; }
.tr-w { fill: #fff; }
.p-green { fill: #2fa757; }
.p-orange { fill: #ef9800; }
.p-teal { fill: #12b0c7; }
.p-grey { fill: #78909c; }
.p-pink { fill: #f25a92; }
.p-blue { fill: #4f8ff0; }
.p-red { fill: #ea4335; stroke: #b3261e; stroke-width: 1px; }
.p-navy { fill: #3e4ea6; stroke: #1b50a0; stroke-width: 2px; }
.gl { fill: #fff; stroke: none; }
.wl { fill: none; stroke: #fff; stroke-width: 2.500px; }
.l { font-size: 28px; fill: #202124; paint-order: stroke; stroke: #fff; stroke-width: 4px; stroke-linejoin: round; }
.l.e { text-anchor: end; }
.l.m { font-weight: 500; fill: #3c3835; font-size: 26px; }
.c-green { fill: #188038; }
.c-orange { fill: #d56e00; }
.c-teal { fill: #00838f; }
.c-grey { fill: #6b7c88; }
.c-pink { fill: #e0195f; }
.c-blue { fill: #1a73e8; }
.fatorda { font-weight: 500; letter-spacing: 3px; fill: #3c4043; font-size: 26px; }
.road-name { font-size: 22px; fill: #5f6368; paint-order: stroke; stroke: #fff; stroke-width: 3px; }
.moll { font-size: 20px; font-weight: 700; letter-spacing: 2px; fill: #5f6368; }
.google { font-family: "Open Sans", sans-serif; font-size: 33px; font-weight: 600; paint-order: stroke; stroke: #fff; stroke-width: 3px; }
.g-b { fill: #4285f4; }
.g-r { fill: #ea4335; }
.g-y { fill: #fbbc05; }
.g-g { fill: #34a853; }

.larger { position: absolute; left: 20px; top: 19px; width: 232px; height: 51px; background: #fff; border-radius: 4px; box-shadow: 0 1px 4px rgba(0,0,0,.25); font: 24px/51px Roboto, sans-serif; color: #1a73e8; text-align: center; }
.thumb { position: absolute; left: 20px; top: 594px; width: 84px; height: 84px; border: 4px solid #fff; border-radius: 5px; box-shadow: 0 2px 6px rgba(0,0,0,.3); background:
  radial-gradient(circle, rgba(150,135,105,.45) 0, rgba(150,135,105,0) 70%) 0 0 / 17px 13px,
  radial-gradient(circle, rgba(50,75,60,.4) 0, rgba(50,75,60,0) 70%) 6px 5px / 23px 19px,
  radial-gradient(circle at 85% 15%, #3d5a45 0, rgba(61,90,69,0) 30%),
  radial-gradient(circle at 10% 40%, #456a57 0, rgba(69,106,87,0) 40%),
  radial-gradient(circle at 85% 75%, #8d7c60 0, rgba(141,124,96,0) 40%),
  #5f6b58; }
.zoom-ctrl { position: absolute; left: 3356px; top: 489px; width: 81px; height: 162px; background: #fff; border-radius: 4px; box-shadow: 0 1px 4px rgba(0,0,0,.2); display: flex; flex-direction: column; align-items: center; }
.zoom-btn { height: 80px; display: flex; align-items: center; justify-content: center; fill: #666; }
.zoom-sep { height: 2px; width: 62px; background: #e6e6e6; flex: none; }
.attrib { position: absolute; right: 0; bottom: 0; height: 28px; display: flex; background: rgba(245,245,245,.7); font: 20px/28px Roboto, sans-serif; color: #202124; letter-spacing: -.1px; }
.attrib span { padding: 0 12px; border-left: 2px solid rgba(230,230,230,.8); white-space: nowrap; }
.attrib span:first-child { border-left: 0; }

.site-footer { height: 111px; padding-top: 31px; text-align: center; color: #212529; letter-spacing: -.72px; }
```
